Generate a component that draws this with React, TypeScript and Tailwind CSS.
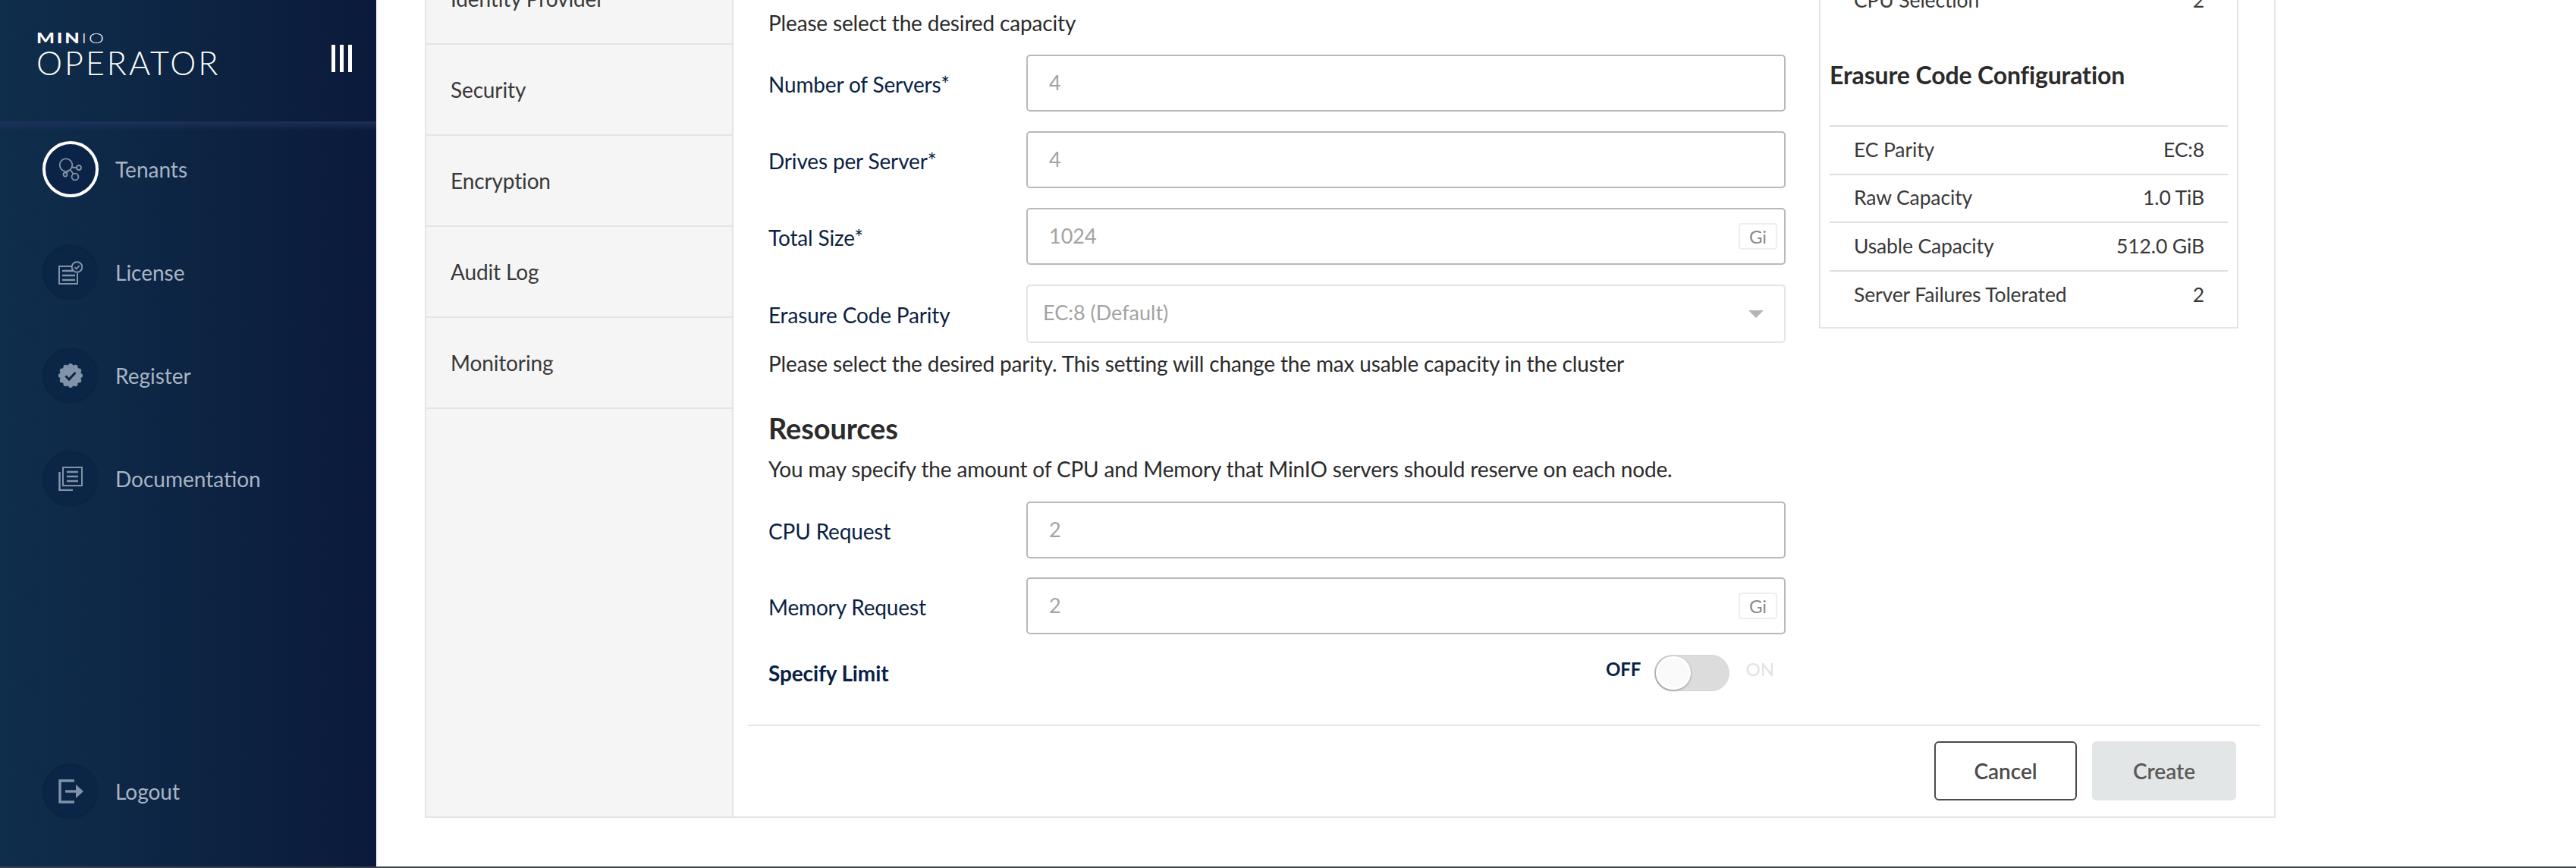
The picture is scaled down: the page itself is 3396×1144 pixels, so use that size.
import React from 'react';

const iconColor = '#8093a8';

function TenantsIcon() {
  return (
    <svg width="32" height="32" viewBox="0 0 32 32" fill="none" stroke={iconColor} strokeWidth="1.8">
      <circle cx="10" cy="10.5" r="8.3" />
      <circle cx="27" cy="14" r="3" />
      <circle cx="22" cy="26" r="4.4" />
      <circle cx="9" cy="23" r="2.5" />
      <path d="M17.5 13.5 24 14M15.5 16.5 20 22.5M14 17 10.5 21" />
    </svg>
  );
}

function LicenseIcon() {
  return (
    <svg width="32" height="32" viewBox="0 0 32 32" fill="none" stroke={iconColor} strokeWidth="2">
      <path d="M17 8H1v23h24V17" />
      <circle cx="24.5" cy="9" r="6.8" />
      <path d="M21.5 9.2l2.2 2.2 4-4.2" strokeWidth="1.8" />
      <path d="M5 14h14M5 20h17M5 26h17" strokeWidth="2.4" />
    </svg>
  );
}

const scallops = Array.from({ length: 12 }, (_, i) => {
  const a = (i * Math.PI) / 6;
  return { x: 16 + 13 * Math.cos(a), y: 16 + 13 * Math.sin(a) };
});

function RegisterIcon() {
  return (
    <svg width="32" height="32" viewBox="0 0 32 32" fill="none">
      <circle cx="16" cy="16" r="14" fill={iconColor} />
      {scallops.map((s, i) => (
        <circle key={i} cx={s.x} cy={s.y} r="3" fill={iconColor} />
      ))}
      <path d="M9.5 16.5l4.5 4.5 8.5-9" stroke="#0c2345" strokeWidth="3" />
    </svg>
  );
}

function DocsIcon() {
  return (
    <svg width="32" height="32" viewBox="0 0 32 32" fill="none" stroke={iconColor}>
      <rect x="6" y="1" width="25" height="24" strokeWidth="2" />
      <path d="M11 7h15M11 13h15M11 19h15" strokeWidth="2.6" />
      <path d="M1.5 7v24H19" strokeWidth="2.6" />
    </svg>
  );
}

function LogoutIcon() {
  return (
    <svg width="33" height="32" viewBox="0 0 33 32" fill="none" stroke={iconColor} strokeWidth="3.4">
      <path d="M21 2H2v28h19" />
      <path d="M9 16h16" />
      <path d="M23 7v18l10-9z" fill={iconColor} stroke="none" />
    </svg>
  );
}

const navItems = [
  { label: 'License', icon: <LicenseIcon /> },
  { label: 'Register', icon: <RegisterIcon /> },
  { label: 'Documentation', icon: <DocsIcon /> },
];

function NavRow({ label, icon, active }: { label: string; icon: React.ReactNode; active?: boolean }) {
  return (
    <div className="flex items-center gap-[22px] pl-[56px]">
      <div
        className={
          active
            ? 'w-[74px] h-[74px] rounded-full border-[4px] border-white bg-[#0a2346] flex items-center justify-center'
            : 'w-[74px] h-[74px] rounded-full border-[4px] border-[#0b2444] bg-[#0a2545] flex items-center justify-center'
        }
      >
        {icon}
      </div>
      <span className="text-[28px] text-[#a8b5c5]">{label}</span>
    </div>
  );
}

function Sidebar() {
  return (
    <aside className="w-[496px] h-full flex flex-col shrink-0 bg-gradient-to-r from-[#0f2e4c] to-[#0b1a3a]">
      <div className="h-[160px] relative shrink-0">
        <div className="absolute left-[48px] top-[38px] flex flex-col text-white">
          <div className="text-[18px] leading-[24px] tracking-[2px] origin-left scale-x-[1.4]">
            <span className="font-black">MIN</span>
            <span className="font-light">IO</span>
          </div>
          <div className="text-[43px] leading-[42px] font-light tracking-[3px]">OPERATOR</div>
        </div>
        <div className="absolute left-[437px] top-[59px] flex gap-[6px]">
          <div className="w-[5px] h-[36px] bg-white" />
          <div className="w-[5px] h-[36px] bg-white" />
          <div className="w-[5px] h-[36px] bg-white" />
        </div>
      </div>
      <div className="h-[12px] shrink-0 bg-gradient-to-b from-[#1c3158] to-transparent" />
      <div className="flex-1 flex flex-col gap-[62px] pt-[14px] pb-[62px]">
        <NavRow label="Tenants" icon={<TenantsIcon />} active />
        {navItems.map((item) => (
          <NavRow key={item.label} label={item.label} icon={item.icon} />
        ))}
        <div className="flex-1" />
        <NavRow label="Logout" icon={<LogoutIcon />} />
      </div>
    </aside>
  );
}

const menuItems = ['Identity Provider', 'Security', 'Encryption', 'Audit Log', 'Monitoring'];

function Field({ label, value, suffix }: { label: string; value: string; suffix?: boolean }) {
  return (
    <div className="flex items-center">
      <div className="w-[340px] text-[28px] tracking-[-0.16px] text-[#0b1f45] pt-[2px]">{label}</div>
      <div className="flex-1 h-[75px] rounded-[5px] border-2 border-[#b9b9b9] bg-white flex items-center pl-[28px] pr-[9px]">
        <span className="flex-1 text-[27px] text-[#a3a3a3]">{value}</span>
        {suffix && (
          <span className="w-[51px] h-[35px] rounded-[4px] border-2 border-[#eeeeee] flex items-center justify-center text-[24px] text-[#8a8a8a]">
            Gi
          </span>
        )}
      </div>
    </div>
  );
}

function SummaryRow({ label, value, last }: { label: string; value: string; last?: boolean }) {
  return (
    <div
      className={
        last
          ? 'h-[63px] flex items-center justify-between pl-[32px] pr-[31px] text-[26.5px] tracking-[-0.13px] text-[#393939]'
          : 'h-[63.5px] flex items-center justify-between pl-[32px] pr-[31px] text-[26.5px] tracking-[-0.13px] text-[#393939] border-b-2 border-[#dedede]'
      }
    >
      <span>{label}</span>
      <span>{value}</span>
    </div>
  );
}

function Summary() {
  return (
    <div className="w-[553px] shrink-0 ml-[44px] border-2 border-t-0 border-[#e5e5e5] px-[12px] pt-[30px] pb-[10px]">
      <div className="h-[63px] flex items-center justify-between pl-[32px] pr-[31px] text-[26.5px] tracking-[-0.13px] text-[#393939]">
        <span>CPU Selection</span>
        <span>2</span>
      </div>
      <div className="mt-[42px] h-[50px] flex items-center text-[32px] font-bold tracking-[-0.13px] text-[#2b2b2b]">
        Erasure Code Configuration
      </div>
      <div className="mt-[41px] border-t-2 border-[#dedede]">
        <SummaryRow label="EC Parity" value="EC:8" />
        <SummaryRow label="Raw Capacity" value="1.0 TiB" />
        <SummaryRow label="Usable Capacity" value="512.0 GiB" />
        <SummaryRow label="Server Failures Tolerated" value="2" last />
      </div>
    </div>
  );
}

function FormColumn() {
  return (
    <div className="flex-1 flex flex-col pt-[71px] pl-[46px]">
      <div className="h-[40px] flex items-center text-[28px] tracking-[-0.16px] text-[#2b2b2b]">
        Please select the desired capacity
      </div>
      <div className="mt-[22px] flex flex-col gap-[26px]">
        <Field label="Number of Servers*" value="4" />
        <Field label="Drives per Server*" value="4" />
        <Field label="Total Size*" value="1024" suffix />
        <div className="flex items-center">
          <div className="w-[340px] text-[28px] tracking-[-0.16px] text-[#0b1f45] pt-[2px]">Erasure Code Parity</div>
          <div className="flex-1 h-[77px] rounded-[5px] border-2 border-[#e5e5e5] flex items-center justify-between pl-[20px] pr-[27px]">
            <span className="text-[27px] text-[#a3a3a3] -mt-[2px]">EC:8 (Default)</span>
            <span className="w-0 h-0 border-x-[10px] border-x-transparent border-t-[10px] border-t-[#b5b5b5]" />
          </div>
        </div>
      </div>
      <div className="h-[40px] mt-[7px] flex items-center text-[28px] tracking-[-0.16px] text-[#2b2b2b]">
        Please select the desired parity. This setting will change the max usable capacity in the cluster
      </div>
      <div className="h-[50px] mt-[40px] flex items-center text-[38px] font-bold tracking-[-0.13px] text-[#2b2b2b]">
        Resources
      </div>
      <div className="h-[40px] mt-[9px] flex items-center text-[28px] tracking-[-0.16px] text-[#2b2b2b]">
        You may specify the amount of CPU and Memory that MinIO servers should reserve on each node.
      </div>
      <div className="mt-[23px] flex flex-col gap-[25px]">
        <Field label="CPU Request" value="2" />
        <Field label="Memory Request" value="2" suffix />
      </div>
      <div className="mt-[27px] h-[48px] flex items-center justify-between">
        <span className="text-[28px] font-bold tracking-[-0.13px] text-[#0b1f45]">Specify Limit</span>
        <div className="flex items-center">
          <span className="text-[24px] font-bold text-[#0b1f45] -mt-[10px]">OFF</span>
          <div className="ml-[18px] w-[99px] h-[48px] rounded-full bg-[#dcdcdc] p-[2px] shadow-[inset_2px_0_2px_rgba(0,0,0,0.12)]">
            <div className="w-[46px] h-[44px] rounded-full bg-[#fafafa] border-[3px] border-white shadow-[0_1px_3px_rgba(0,0,0,0.35)]" />
          </div>
          <span className="ml-[21px] mr-[15px] text-[24px] text-[#e2e2e2] -mt-[10px]">ON</span>
        </div>
      </div>
    </div>
  );
}

export default function App() {
  return (
    <div className="w-[3396px] h-[1144px] overflow-hidden flex flex-col bg-white font-['Lato',sans-serif]">
      <div className="flex-1 min-h-0 flex">
        <Sidebar />
        <main className="flex-1 pl-[64px] shadow-[inset_6px_0_6px_-4px_rgba(0,0,0,0.03)]">
          <div className="w-[2440px] -mt-[61px] flex border-2 border-t-0 border-[#e5e5e5]">
            <div className="w-[405px] shrink-0 bg-[#f5f5f5] border-r-2 border-[#e3e3e3]">
              {menuItems.map((item) => (
                <div
                  key={item}
                  className="h-[120px] pl-[32px] flex items-center text-[28px] tracking-[-0.13px] text-[#393939] border-b-2 border-[#e5e5e5]"
                >
                  {item}
                </div>
              ))}
            </div>
            <div className="flex-1 min-w-0 flex flex-col">
              <div className="flex items-start pr-[47px]">
                <FormColumn />
                <Summary />
              </div>
              <div className="mx-[19px] mt-[44px] pt-[20px] pb-[20.5px] border-t-2 border-[#e5e5e5] flex justify-end gap-[20px] pr-[31px]">
                <button className="w-[188px] h-[78px] rounded-[6px] border-2 border-[#4b4b4b] bg-white text-[28px] font-semibold text-[#4b4b4b]">
                  Cancel
                </button>
                <button className="w-[190px] h-[78px] rounded-[6px] bg-[#e3e6e6] text-[28px] font-semibold text-[#5a5a5a]">
                  Create
                </button>
              </div>
            </div>
          </div>
        </main>
      </div>
      <div className="h-[2px] bg-[#3c4146] shrink-0" />
    </div>
  );
}
